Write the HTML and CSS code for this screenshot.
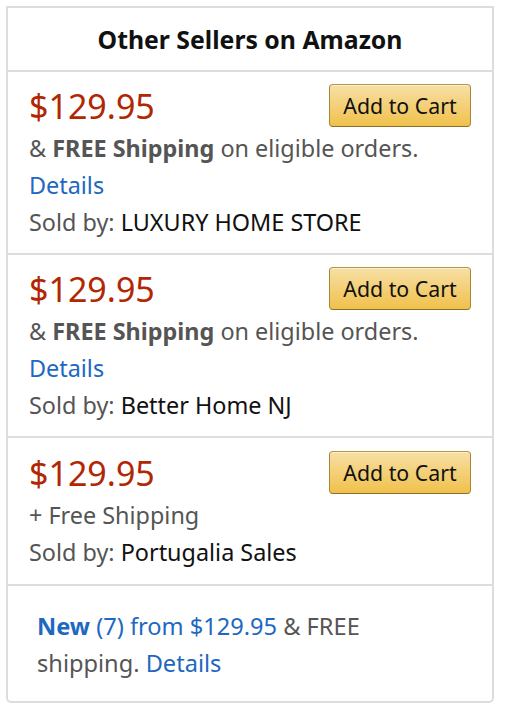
FILE: index.html
```html
<!DOCTYPE html>
<html>
<head>
<meta charset="utf-8">
<link rel="stylesheet" href="styles.css">
</head>
<body>
<div class="box">
  <div class="header">Other Sellers on Amazon</div>
  <div class="row">
    <div class="top">
      <span class="price">$129.95</span>
      <button class="cart">Add to Cart</button>
    </div>
    <div class="line">&amp; <b>FREE Shipping</b> on eligible orders.</div>
    <div class="line"><a class="link">Details</a></div>
    <div class="line">Sold by: <span class="seller">LUXURY HOME STORE</span></div>
  </div>
  <div class="row">
    <div class="top">
      <span class="price">$129.95</span>
      <button class="cart">Add to Cart</button>
    </div>
    <div class="line">&amp; <b>FREE Shipping</b> on eligible orders.</div>
    <div class="line"><a class="link">Details</a></div>
    <div class="line">Sold by: <span class="seller">Better Home NJ</span></div>
  </div>
  <div class="row row-short">
    <div class="top">
      <span class="price">$129.95</span>
      <button class="cart">Add to Cart</button>
    </div>
    <div class="line">+ Free Shipping</div>
    <div class="line">Sold by: <span class="seller">Portugalia Sales</span></div>
  </div>
  <div class="footer">
    <a class="link"><b>New</b> (7) from $129.95</a> &amp; FREE shipping. <a class="link">Details</a>
  </div>
</div>
</body>
</html>
```

FILE: styles.css
```css
html, body {
  margin: 0;
  padding: 0;
  background: #fff;
}
body {
  font-family: "Noto Sans", "Open Sans", sans-serif;
  color: #555;
}
.box {
  margin: 6px 0 0 6px;
  width: 484px;
  border: 2px solid #ddd;
  border-radius: 0 0 5px 5px;
}
.header {
  height: 62px;
  display: flex;
  align-items: center;
  justify-content: center;
  font-weight: 700;
  font-size: 24.8px;
  color: #111;
  border-bottom: 2px solid #ddd;
}
.row {
  padding: 12px 21px 12px 21px;
  border-bottom: 2px solid #ddd;
}
.row-short {
  padding-top: 13px;
  padding-bottom: 13px;
}
.top {
  display: flex;
  justify-content: space-between;
  align-items: center;
  height: 43px;
  margin-bottom: 3px;
}
.price {
  font-size: 34px;
  color: #b12704;
}
.cart {
  width: 142px;
  height: 43px;
  border: 1px solid #a88734;
  border-color: #b9953c #a88734 #8b6f2b;
  border-radius: 4px;
  background: linear-gradient(to bottom, #f7dfa5, #f0c14b);
  box-shadow: inset 0 1px 0 rgba(255,255,255,0.5);
  font-family: "Noto Sans", "Open Sans", sans-serif;
  font-size: 21.3px;
  color: #111;
  padding: 0;
}
.line {
  font-size: 23.4px;
  line-height: 37px;
  white-space: nowrap;
}
.line b {
  font-weight: 700;
}
.link {
  color: #1e68bf;
  text-decoration: none;
}
.seller {
  color: #111;
}
.footer {
  padding: 22px 29px 19px 29px;
  font-size: 23.6px;
  line-height: 37px;
  width: 360px;
}
```
